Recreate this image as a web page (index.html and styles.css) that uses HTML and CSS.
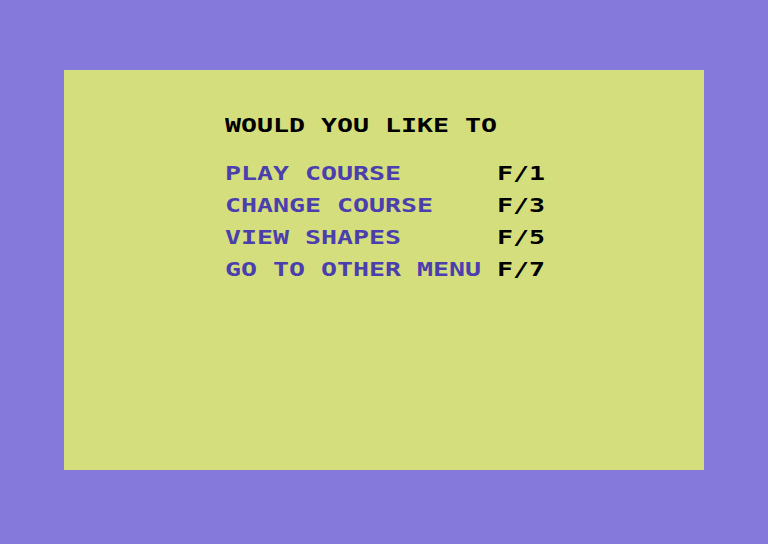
FILE: index.html
```html
<!doctype html>
<html>
    <head>
        <meta charset="UTF-8" />
        <meta name="viewport" content="width=device-width" />
        <title>Course menu</title>
        <link rel="stylesheet" href="styles.css">
    </head>
    <body>
        <div class="screen">
            <p class="title"><span class="txt">WOULD YOU LIKE TO</span></p>
            <ul class="menu">
                <li><span class="txt label">PLAY COURSE</span><span class="txt key">F/1</span></li>
                <li><span class="txt label">CHANGE COURSE</span><span class="txt key">F/3</span></li>
                <li><span class="txt label">VIEW SHAPES</span><span class="txt key">F/5</span></li>
                <li><span class="txt label">GO TO OTHER MENU</span><span class="txt key">F/7</span></li>
            </ul>
        </div>
    </body>
</html>
```

FILE: styles.css
```css
html,
body {
    margin: 0;
    background-color: #8579dc;
}
body {
    padding: 70px 64px 74px;
}
/* 40x25 text screen, 16px per character cell */
.screen {
    width: 640px;
    height: 400px;
    box-sizing: border-box;
    padding: 47px 0 0 161px;
    background-color: #d5de7d;
    color: #000;
    font-family: "DejaVu Sans Mono", monospace;
    font-weight: bold;
    font-size: 19px;
    line-height: 16px;
}
/* stretch the glyphs so each one fills a 16px cell */
.txt {
    display: inline-block;
    white-space: pre;
    transform: scaleX(1.4);
    transform-origin: 0 0;
    letter-spacing: -0.01px;
}
.title {
    margin: 0 0 32px;
}
.menu {
    list-style: none;
    margin: 0;
    padding: 0;
}
.menu li {
    display: grid;
    grid-template-columns: 272px 48px;
    margin-bottom: 16px;
}
.label {
    color: #4a3fad;
}
.key {
    color: #000;
}
```
